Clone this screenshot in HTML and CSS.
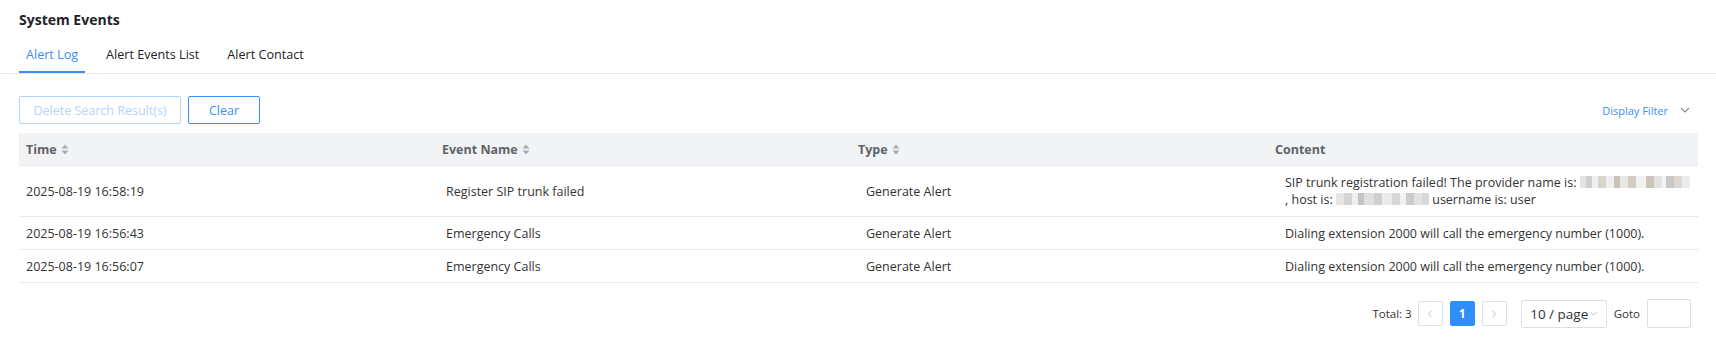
FILE: index.html
```html
<!DOCTYPE html>
<html lang="en">
<head>
<meta charset="utf-8">
<title>System Events</title>
<link rel="stylesheet" href="styles.css">
</head>
<body>
<div class="page">
  <h1 class="title">System Events</h1>
  <nav class="tabs">
    <a class="tab active">Alert Log</a>
    <a class="tab">Alert Events List</a>
    <a class="tab">Alert Contact</a>
  </nav>
  <div class="content">
    <div class="toolbar">
      <div class="actions">
        <button class="btn btn-disabled">Delete Search Result(s)</button>
        <button class="btn btn-outline">Clear</button>
      </div>
      <div class="filter">Display Filter
        <svg class="chev" width="10" height="6" viewBox="0 0 10 6"><path d="M1 1l4 4 4-4" fill="none" stroke="#8a8f99" stroke-width="1.2"/></svg>
      </div>
    </div>
    <div class="table">
      <div class="row head">
        <div class="cell c1">Time <svg class="sort" width="8" height="11" viewBox="0 0 8 11"><path d="M4 0.5L7.5 4.5H0.5z M4 10.5L7.5 6.5H0.5z" fill="#a8abb2"/></svg></div>
        <div class="cell c2">Event Name <svg class="sort" width="8" height="11" viewBox="0 0 8 11"><path d="M4 0.5L7.5 4.5H0.5z M4 10.5L7.5 6.5H0.5z" fill="#a8abb2"/></svg></div>
        <div class="cell c3">Type <svg class="sort" width="8" height="11" viewBox="0 0 8 11"><path d="M4 0.5L7.5 4.5H0.5z M4 10.5L7.5 6.5H0.5z" fill="#a8abb2"/></svg></div>
        <div class="cell c4">Content</div>
      </div>
      <div class="row body tall">
        <div class="cell c1">2025-08-19 16:58:19</div>
        <div class="cell c2 d2">Register SIP trunk failed</div>
        <div class="cell c3 d3">Generate Alert</div>
        <div class="cell c4 d4">SIP trunk registration failed! The provider name is: <span class="blur b1"></span><br>, host is: <span class="blur b2"></span> username is: user</div>
      </div>
      <div class="row body">
        <div class="cell c1">2025-08-19 16:56:43</div>
        <div class="cell c2 d2">Emergency Calls</div>
        <div class="cell c3 d3">Generate Alert</div>
        <div class="cell c4 d4">Dialing extension 2000 will call the emergency number (1000).</div>
      </div>
      <div class="row body">
        <div class="cell c1">2025-08-19 16:56:07</div>
        <div class="cell c2 d2">Emergency Calls</div>
        <div class="cell c3 d3">Generate Alert</div>
        <div class="cell c4 d4">Dialing extension 2000 will call the emergency number (1000).</div>
      </div>
    </div>
    <div class="pager">
      <span class="total">Total: 3</span>
      <span class="pbtn"><svg width="6" height="8" viewBox="0 0 6 8"><path d="M4.5 0.8L1.5 4l3 3.2" fill="none" stroke="#c0c4cc" stroke-width="1"/></svg></span>
      <span class="pbtn current">1</span>
      <span class="pbtn"><svg width="6" height="8" viewBox="0 0 6 8"><path d="M1.5 0.8L4.5 4l-3 3.2" fill="none" stroke="#c0c4cc" stroke-width="1"/></svg></span>
      <span class="size">10 / page<svg width="7" height="5" viewBox="0 0 7 5"><path d="M0.5 1l3 3 3-3" fill="none" stroke="#b0b4bc" stroke-width="0.9"/></svg></span>
      <span class="goto">Goto</span>
      <span class="gotoin"></span>
    </div>
  </div>
</div>
</body>
</html>
```

FILE: styles.css
```css
* { box-sizing: border-box; }
body {
  margin: 0;
  background: #fff;
  font-family: "Open Sans", "Noto Sans", sans-serif;
  color: #333;
  font-size: 12.5px;
}
.title {
  margin: 0;
  padding: 10px 19px 0;
  font-size: 14px;
  line-height: 20px;
  font-weight: 700;
  color: #1f2329;
}
.tabs {
  display: flex;
  padding: 0 12px 0 19px;
  margin-top: 14px;
  border-bottom: 1px solid #e4e7ed;
}
.tab {
  padding: 2px 7px 7px;
  line-height: 18px;
  margin-right: 14px;
  border-bottom: 2px solid transparent;
  color: #222;
  font-size: 12.6px;
}
.tab.active {
  color: #3a8ef6;
  border-bottom-color: #3a8ef6;
}
.content {
  padding: 22px 18px 0 19px;
}
.toolbar {
  display: flex;
  justify-content: space-between;
  align-items: center;
}
.actions { display: flex; gap: 7px; }
.btn {
  height: 28px;
  border-radius: 2px;
  background: #fff;
  font-family: inherit;
  font-size: 12.5px;
  padding: 0;
}
.btn-disabled {
  width: 162px;
  border: 1px solid #b3d4fb;
  color: #b3d4fb;
}
.btn-outline {
  width: 72px;
  border: 1px solid #3a8ef6;
  color: #3a8ef6;
}
.filter {
  display: flex;
  align-items: center;
  gap: 12px;
  margin-right: 8px;
  color: #3a8ef6;
  font-size: 11px;
}
.table {
  margin-top: 9px;
}
.row {
  display: grid;
  grid-template-columns: 416px 416px 417px 1fr;
  border-bottom: 1px solid #e6e9ef;
  align-items: center;
}
.row.head {
  background: #f2f3f5;
  height: 33px;
  font-weight: 700;
  color: #5f6368;
  font-size: 12.5px;
}
.row.body { height: 33px; }
.row.tall { height: 51px; }
.cell {
  padding-left: 7px;
  line-height: 17px;
  white-space: nowrap;
}
.d2 { padding-left: 11px; }
.d3 { padding-left: 15px; }
.d4 { padding-left: 17px; }
.sort {
  margin-left: 1px;
  vertical-align: -1px;
}
.blur {
  display: inline-block;
  height: 12px;
  vertical-align: -1px;
}
.b1 {
  width: 110px;
  background: linear-gradient(90deg,
    #e4e4e4 0 6px, #cfcfcf 6px 12px, #f0f0f0 12px 18px, #d9d4cc 18px 26px, #efefef 26px 34px,
    #c9c2b8 34px 40px, #e8e8e8 40px 48px, #d3ccc2 48px 56px, #f2f2f2 56px 66px, #cdc5ba 66px 74px,
    #e3e3e3 74px 82px, #f3f3f3 82px 86px, #c8c8c8 86px 94px, #ded8d0 94px 102px, #ececec 102px 110px);
}
.b2 {
  width: 93px;
  background: linear-gradient(90deg,
    #e6e6e6 0 8px, #d4d4d4 8px 16px, #eeeeee 16px 22px, #c4c4c4 22px 28px, #e0e0e0 28px 38px,
    #cfcfcf 38px 46px, #ebebeb 46px 56px, #d6d6d6 56px 64px, #f1f1f1 64px 70px, #cccccc 70px 78px,
    #e2e2e2 78px 86px, #d8d8d8 86px 93px);
}
.pager {
  display: flex;
  justify-content: flex-end;
  align-items: center;
  margin-top: 16px;
  padding-right: 7px;
  font-size: 11.5px;
  color: #333;
}
.total { margin-right: 6px; }
.pbtn {
  width: 25px;
  height: 25px;
  border: 1px solid #dcdfe6;
  border-radius: 2px;
  display: flex;
  align-items: center;
  justify-content: center;
  margin-right: 7px;
}
.pbtn.current {
  background: #2f8ef7;
  border-color: #2f8ef7;
  color: #fff;
  font-weight: 700;
}
.size {
  margin-left: 7px;
  width: 86px;
  height: 28px;
  border: 1px solid #dcdfe6;
  border-radius: 2px;
  display: flex;
  align-items: center;
  justify-content: center;
  gap: 2px;
  font-size: 13.5px;
  color: #333;
}
.goto { margin: 0 7px 0 7px; }
.gotoin {
  width: 44px;
  height: 29px;
  border: 1px solid #dcdfe6;
  border-radius: 2px;
}
```
